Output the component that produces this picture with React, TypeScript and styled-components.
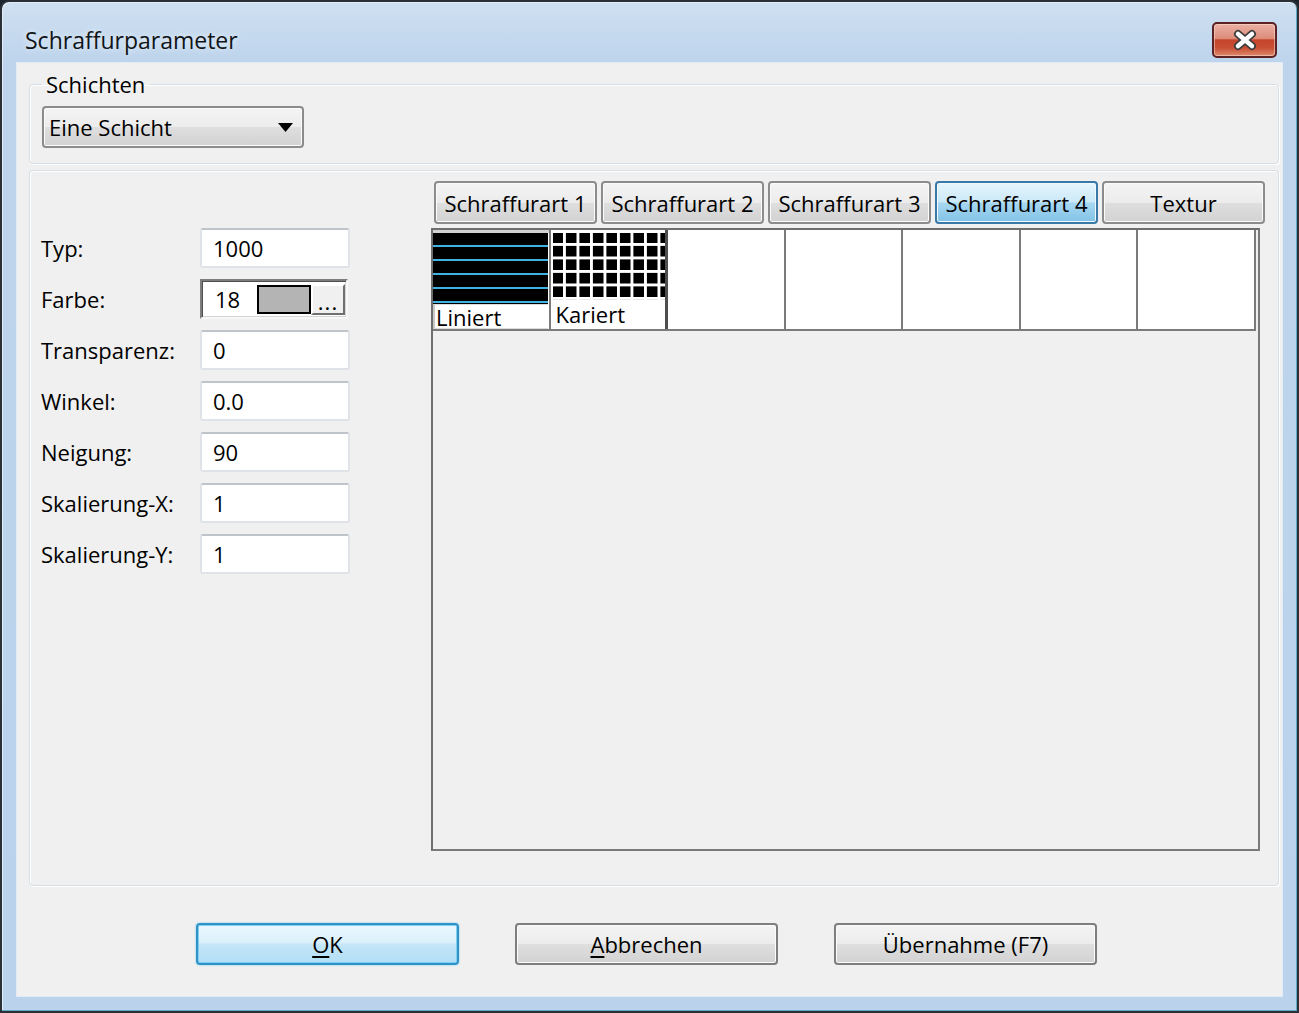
import React from 'react';
import styled, { createGlobalStyle, css } from 'styled-components';

const GlobalStyle = createGlobalStyle`
  html, body { margin: 0; padding: 0; background: #1d262e; }
  body { font-family: "Open Sans", "Noto Sans", "DejaVu Sans", sans-serif; }
  *, *::before, *::after { box-sizing: border-box; }
`;

const Window = styled.div`
  width: 1299px;
  height: 1013px;
  border: 2px solid #2a3036;
  border-radius: 9px 9px 0 0;
  background: linear-gradient(180deg, #cfe0f1 0px, #bdd4ec 60px, #bad2eb 100%);
  box-shadow: inset -1px -1px 0 #5fa8c6, inset 1px 1px 0 #e4eef8;
  display: flex;
  flex-direction: column;
  padding: 0 15px 15px 15px;
  font-size: 22px;
  color: #000;
  overflow: hidden;
`;

const TitleBar = styled.div`
  height: 61px;
  flex: none;
  display: flex;
  align-items: center;
  justify-content: space-between;
  padding: 14px 5px 0 8px;
`;

const Title = styled.div`
  font-size: 23px;
  line-height: 30px;
  color: #101418;
  text-shadow: 0 0 6px rgba(255, 255, 255, 0.8);
`;

const CloseButton = styled.div`
  width: 65px;
  height: 36px;
  border: 2px solid #5a2222;
  border-radius: 5px;
  background: linear-gradient(180deg, #eab1a4 0%, #dd8d7b 45%, #c5442b 50%, #c84f35 75%, #de8a6c 100%);
  box-shadow: inset 0 0 0 1px rgba(255, 220, 210, 0.55);
  display: flex;
  align-items: center;
  justify-content: center;
`;

const Client = styled.div`
  flex: 1;
  background: #f0f0f0;
  box-shadow: 0 0 0 1px #e3ecf6;
  display: flex;
  flex-direction: column;
  padding: 0 3px 0 12px;
`;

const groupFrame = css`
  border: 1px solid #d5dfe5;
  border-radius: 4px;
  box-shadow: inset 1px 1px 0 #ffffff, 1px 1px 0 #ffffff;
`;

const LayerGroup = styled.fieldset`
  ${groupFrame};
  margin: 6px 0 0 0;
  padding: 7px 12px 15px 12px;
  min-width: 0;
`;

const Legend = styled.legend`
  padding: 0 4px;
  margin: 0;
  line-height: 30px;
  font-size: 22px;
`;

const Combo = styled.div`
  width: 262px;
  height: 42px;
  border: 2px solid #8b8b8b;
  border-radius: 4px;
  background: linear-gradient(180deg, #f4f4f4 0%, #ececec 50%, #dfdfdf 50%, #d2d2d2 100%);
  box-shadow: inset 0 0 0 1px #fbfbfb;
  display: flex;
  align-items: center;
  justify-content: space-between;
  padding: 0 9px 0 5px;
  line-height: 30px;
`;

const PatternGroup = styled.div`
  ${groupFrame};
  margin-top: 6px;
  height: 716px;
  display: flex;
  padding: 10px 13px 0 11px;
`;

const FormColumn = styled.div`
  width: 390px;
  flex: none;
  display: flex;
  flex-direction: column;
  gap: 11px;
  padding-top: 47px;
`;

const FormRow = styled.div`
  height: 40px;
  display: flex;
  align-items: center;
`;

const FieldLabel = styled.div`
  width: 159px;
  flex: none;
  line-height: 30px;
`;

const TextField = styled.input`
  width: 150px;
  height: 40px;
  border: 2px solid #dfe3e8;
  border-top-color: #bfc4cb;
  border-radius: 3px;
  background: #fff;
  padding: 0 0 0 11px;
  font: inherit;
  font-size: 22px;
  color: #000;
  outline: none;
`;

const ColorField = styled.div`
  width: 148px;
  height: 40px;
  border: 2px solid;
  border-color: #7d7d7d #f7f7f7 #f7f7f7 #7d7d7d;
  box-shadow: inset 1px 1px 0 #4e4e4e, inset -1px -1px 0 #d6d6d6;
  background: #fff;
  display: flex;
  align-items: center;
`;

const ColorValue = styled.div`
  width: 55px;
  flex: none;
  padding-left: 13px;
  line-height: 30px;
`;

const Swatch = styled.div`
  width: 54px;
  height: 29px;
  flex: none;
  border: 2px solid #000;
  background: #b4b4b4;
`;

const EllipsisButton = styled.div`
  width: 34px;
  height: 31px;
  flex: none;
  border: 2px solid;
  border-color: #ffffff #6f6f6f #6f6f6f #ffffff;
  background: #f0f0f0;
  display: flex;
  align-items: flex-end;
  justify-content: center;
  line-height: 24px;
  font-size: 22px;
  letter-spacing: 1px;
`;

const PatternColumn = styled.div`
  width: 834px;
  flex: none;
  display: flex;
  flex-direction: column;
`;

const TabRow = styled.div`
  height: 43px;
  display: flex;
  gap: 4px;
  padding-left: 3px;
  margin-bottom: 4px;
`;

const Tab = styled.div<{ $active?: boolean }>`
  width: 163px;
  height: 43px;
  flex: none;
  border: 2px solid ${(p) => (p.$active ? '#3a78a8' : '#8c8c8c')};
  border-radius: 4px;
  background: ${(p) =>
    p.$active
      ? 'linear-gradient(180deg, #e6f5fc 0%, #cbe9f8 48%, #a6d7f1 52%, #82c2e6 100%)'
      : 'linear-gradient(180deg, #f4f4f4 0%, #ececec 50%, #dfdfdf 50%, #d2d2d2 100%)'};
  box-shadow: inset 0 0 0 1px ${(p) => (p.$active ? '#eef9ff' : '#fbfbfb')};
  display: flex;
  align-items: center;
  justify-content: center;
  line-height: 30px;
  white-space: nowrap;
`;

const Panel = styled.div`
  width: 829px;
  height: 623px;
  border: 2px solid #6e6e6e;
  border-right-color: #7a7a7a;
  border-bottom-color: #7a7a7a;
  background: #f0f0f0;
`;

const CellRow = styled.div`
  display: grid;
  grid-template-columns: repeat(7, 1fr);
  height: 101px;
  margin-right: 2px;
  border-bottom: 2px solid #7b7b7b;
`;

const Cell = styled.div<{ $variant: 'sunken' | 'raised' | 'empty' }>`
  background: #fff;
  border-right: ${(p) => (p.$variant === 'raised' ? '3px solid #4f4f4f' : '2px solid #7b7b7b')};
  display: flex;
  flex-direction: column;
  padding-top: 3px;
  padding-left: ${(p) => (p.$variant === 'raised' ? '2px' : '0')};
  padding-right: ${(p) => (p.$variant === 'sunken' ? '1px' : '0')};
  ${(p) =>
    p.$variant === 'sunken' &&
    css`
      box-shadow: inset 0 3px 0 #d2d2d2;
    `}
`;

const LinedPattern = styled.div`
  height: 71px;
  background: repeating-linear-gradient(
    180deg,
    #000 0px,
    #000 12px,
    #3fb2e2 12px,
    #3fb2e2 14px
  );
`;

const CheckedPattern = styled.div`
  height: 67px;
  background-color: #000;
  background-image: linear-gradient(90deg, #fff 3px, transparent 3px),
    linear-gradient(180deg, #fff 3px, transparent 3px);
  background-size: 13.5px 13.5px;
  background-position: 10px 10px;
`;

const CellLabel = styled.div<{ $sunken?: boolean }>`
  height: 25px;
  margin-top: ${(p) => (p.$sunken ? '0' : '2px')};
  line-height: 24px;
  padding-left: 3px;
  background: #fff;
  font-size: 22px;
  white-space: nowrap;
  ${(p) =>
    p.$sunken &&
    css`
      border-left: 2px solid #c9c9c9;
      border-top: 1px solid #dcdcdc;
      border-bottom: 1px solid #dcdcdc;
      padding-left: 1px;
    `}
`;

const ButtonRow = styled.div`
  display: flex;
  gap: 56px;
  margin-top: 37px;
  padding-left: 167px;
`;

const DialogButton = styled.div<{ $default?: boolean }>`
  width: 263px;
  height: 42px;
  border: 2px solid ${(p) => (p.$default ? '#2f93c8' : '#7e7e7e')};
  border-radius: 4px;
  background: ${(p) =>
    p.$default
      ? 'linear-gradient(180deg, #eaf7fd 0%, #dcf1fc 45%, #c4e6f8 52%, #b3def5 100%)'
      : 'linear-gradient(180deg, #f4f4f4 0%, #ececec 50%, #dfdfdf 50%, #d2d2d2 100%)'};
  box-shadow: ${(p) =>
    p.$default ? 'inset 0 0 0 1px #7fd0f2, 0 0 2px #5cc4ec' : 'inset 0 0 0 1px #fbfbfb'};
  display: flex;
  align-items: center;
  justify-content: center;
  line-height: 30px;
`;

const Mnemonic = styled.span`
  text-decoration: underline;
  text-underline-offset: 3px;
  text-decoration-thickness: 2px;
`;

const fields: { label: string; value: string }[] = [
  { label: 'Typ:', value: '1000' },
  { label: 'Farbe:', value: '18' },
  { label: 'Transparenz:', value: '0' },
  { label: 'Winkel:', value: '0.0' },
  { label: 'Neigung:', value: '90' },
  { label: 'Skalierung-X:', value: '1' },
  { label: 'Skalierung-Y:', value: '1' },
];

const tabs = ['Schraffurart 1', 'Schraffurart 2', 'Schraffurart 3', 'Schraffurart 4', 'Textur'];

export default function App() {
  return (
    <>
      <GlobalStyle />
      <Window>
        <TitleBar>
          <Title>Schraffurparameter</Title>
          <CloseButton>
            <svg width="30" height="22" viewBox="0 0 30 22">
              <path d="M8 5 L22 17 M22 5 L8 17" stroke="#3d3d3d" strokeWidth="8" strokeLinecap="round" fill="none" />
              <path d="M8 5 L22 17 M22 5 L8 17" stroke="#ffffff" strokeWidth="4.5" strokeLinecap="round" fill="none" />
            </svg>
          </CloseButton>
        </TitleBar>
        <Client>
          <LayerGroup>
            <Legend>Schichten</Legend>
            <Combo>
              <span>Eine Schicht</span>
              <svg width="15" height="9" viewBox="0 0 15 9">
                <polygon points="0,0 15,0 7.5,9" fill="#000" />
              </svg>
            </Combo>
          </LayerGroup>
          <PatternGroup>
            <FormColumn>
              {fields.map((f) => (
                <FormRow key={f.label}>
                  <FieldLabel>{f.label}</FieldLabel>
                  {f.label === 'Farbe:' ? (
                    <ColorField>
                      <ColorValue>{f.value}</ColorValue>
                      <Swatch />
                      <EllipsisButton>...</EllipsisButton>
                    </ColorField>
                  ) : (
                    <TextField value={f.value} readOnly />
                  )}
                </FormRow>
              ))}
            </FormColumn>
            <PatternColumn>
              <TabRow>
                {tabs.map((t, i) => (
                  <Tab key={t} $active={i === 3}>
                    {t}
                  </Tab>
                ))}
              </TabRow>
              <Panel>
                <CellRow>
                  <Cell $variant="sunken">
                    <LinedPattern />
                    <CellLabel $sunken>Liniert</CellLabel>
                  </Cell>
                  <Cell $variant="raised">
                    <CheckedPattern />
                    <CellLabel>Kariert</CellLabel>
                  </Cell>
                  <Cell $variant="empty" />
                  <Cell $variant="empty" />
                  <Cell $variant="empty" />
                  <Cell $variant="empty" />
                  <Cell $variant="empty" />
                </CellRow>
              </Panel>
            </PatternColumn>
          </PatternGroup>
          <ButtonRow>
            <DialogButton $default>
              <span>
                <Mnemonic>O</Mnemonic>K
              </span>
            </DialogButton>
            <DialogButton>
              <span>
                <Mnemonic>A</Mnemonic>bbrechen
              </span>
            </DialogButton>
            <DialogButton>Übernahme (F7)</DialogButton>
          </ButtonRow>
        </Client>
      </Window>
    </>
  );
}
